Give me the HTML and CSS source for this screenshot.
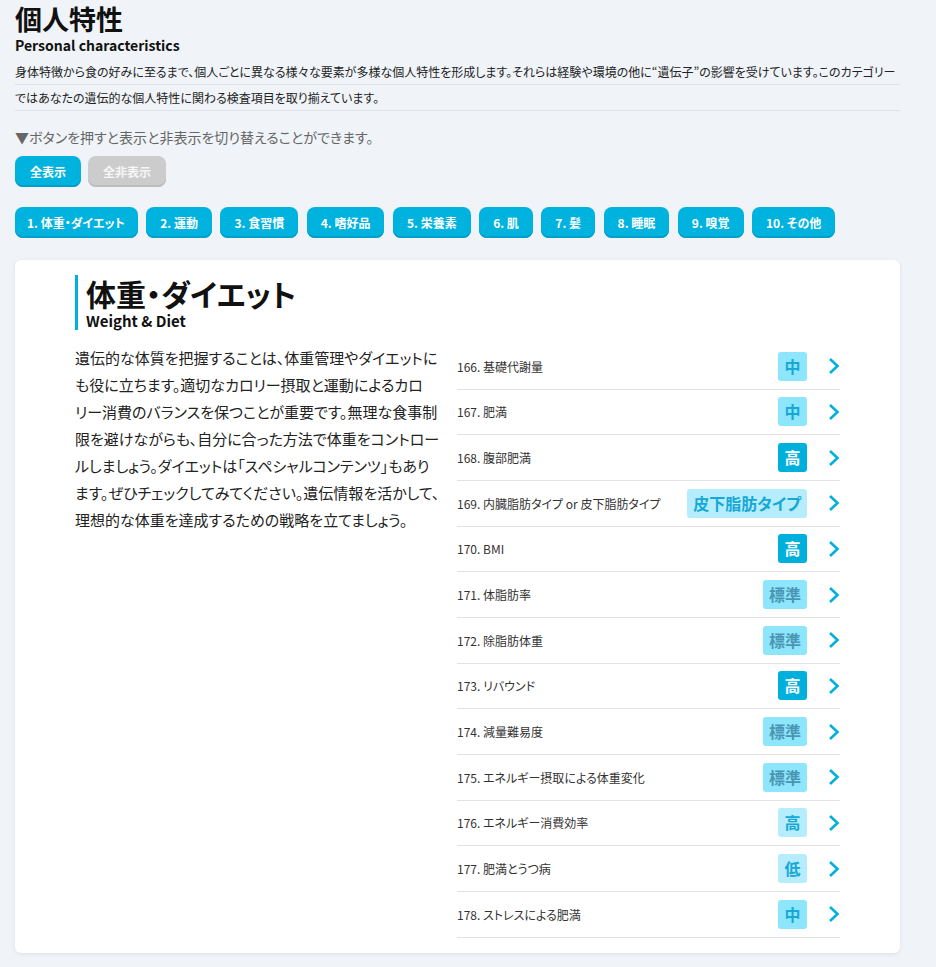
FILE: index.html
```html
<!DOCTYPE html>
<html lang="ja">
<head>
<meta charset="utf-8">
<title>個人特性</title>
<link rel="stylesheet" href="styles.css">
</head>
<body>
<div class="page">
  <header class="intro">
    <h1 class="title">個人特性</h1>
    <p class="title-en">Personal characteristics</p>
    <p class="lead">身体特徴から食の好みに至るまで、個人ごとに異なる様々な要素が多様な個人特性を形成します。それらは経験や環境の他に“遺伝子”の影響を受けています。このカテゴリーではあなたの遺伝的な個人特性に関わる検査項目を取り揃えています。</p>
    <p class="hint">▼ボタンを押すと表示と非表示を切り替えることができます。</p>
    <div class="toggles">
      <button class="btn">全表示</button>
      <button class="btn btn-off">全非表示</button>
    </div>
    <nav class="cats">
      <button class="btn">1. 体重・ダイエット</button>
      <button class="btn">2. 運動</button>
      <button class="btn">3. 食習慣</button>
      <button class="btn">4. 嗜好品</button>
      <button class="btn">5. 栄養素</button>
      <button class="btn">6. 肌</button>
      <button class="btn">7. 髪</button>
      <button class="btn">8. 睡眠</button>
      <button class="btn">9. 嗅覚</button>
      <button class="btn">10. その他</button>
    </nav>
  </header>

  <section class="card">
    <div class="sec-head">
      <h2 class="sec-title">体重・ダイエット</h2>
      <p class="sec-en">Weight &amp; Diet</p>
    </div>
    <div class="sec-body">
      <p class="sec-text">遺伝的な体質を把握することは、体重管理やダイエットに<br>も役に立ちます。適切なカロリー摂取と運動によるカロ<br>リー消費のバランスを保つことが重要です。無理な食事制<br>限を避けながらも、自分に合った方法で体重をコントロー<br>ルしましょう。ダイエットは「スペシャルコンテンツ」もあり<br>ます。ぜひチェックしてみてください。遺伝情報を活かして、<br>理想的な体重を達成するための戦略を立てましょう。</p>
      <ul class="items">
        <li class="item"><span class="name">166. 基礎代謝量</span><span class="lv lv-mid">中</span><svg class="chev" viewBox="0 0 12 18"><path d="M2 2 L9.5 9 L2 16"/></svg></li>
        <li class="item"><span class="name">167. 肥満</span><span class="lv lv-mid">中</span><svg class="chev" viewBox="0 0 12 18"><path d="M2 2 L9.5 9 L2 16"/></svg></li>
        <li class="item"><span class="name">168. 腹部肥満</span><span class="lv lv-high">高</span><svg class="chev" viewBox="0 0 12 18"><path d="M2 2 L9.5 9 L2 16"/></svg></li>
        <li class="item"><span class="name">169. 内臓脂肪タイプ or 皮下脂肪タイプ</span><span class="lv lv-light">皮下脂肪タイプ</span><svg class="chev" viewBox="0 0 12 18"><path d="M2 2 L9.5 9 L2 16"/></svg></li>
        <li class="item"><span class="name">170. BMI</span><span class="lv lv-high">高</span><svg class="chev" viewBox="0 0 12 18"><path d="M2 2 L9.5 9 L2 16"/></svg></li>
        <li class="item"><span class="name">171. 体脂肪率</span><span class="lv lv-std">標準</span><svg class="chev" viewBox="0 0 12 18"><path d="M2 2 L9.5 9 L2 16"/></svg></li>
        <li class="item"><span class="name">172. 除脂肪体重</span><span class="lv lv-std">標準</span><svg class="chev" viewBox="0 0 12 18"><path d="M2 2 L9.5 9 L2 16"/></svg></li>
        <li class="item"><span class="name">173. リバウンド</span><span class="lv lv-high">高</span><svg class="chev" viewBox="0 0 12 18"><path d="M2 2 L9.5 9 L2 16"/></svg></li>
        <li class="item"><span class="name">174. 減量難易度</span><span class="lv lv-std">標準</span><svg class="chev" viewBox="0 0 12 18"><path d="M2 2 L9.5 9 L2 16"/></svg></li>
        <li class="item"><span class="name">175. エネルギー摂取による体重変化</span><span class="lv lv-std">標準</span><svg class="chev" viewBox="0 0 12 18"><path d="M2 2 L9.5 9 L2 16"/></svg></li>
        <li class="item"><span class="name">176. エネルギー消費効率</span><span class="lv lv-light">高</span><svg class="chev" viewBox="0 0 12 18"><path d="M2 2 L9.5 9 L2 16"/></svg></li>
        <li class="item"><span class="name">177. 肥満とうつ病</span><span class="lv lv-light">低</span><svg class="chev" viewBox="0 0 12 18"><path d="M2 2 L9.5 9 L2 16"/></svg></li>
        <li class="item"><span class="name">178. ストレスによる肥満</span><span class="lv lv-mid">中</span><svg class="chev" viewBox="0 0 12 18"><path d="M2 2 L9.5 9 L2 16"/></svg></li>
      </ul>
    </div>
  </section>
</div>
</body>
</html>
```

FILE: styles.css
```css
* { box-sizing: border-box; }

html, body {
  margin: 0;
  padding: 0;
  background: #f0f4f8;
}

body {
  font-family: "Noto Sans CJK JP", "Noto Sans", sans-serif;
  font-feature-settings: "palt";
  color: #222;
}

.page {
  width: 885px;
  margin-left: 15px;
  padding-top: 1px;
  padding-bottom: 14px;
}

.title {
  margin: 0;
  font-size: 27px;
  line-height: 35px;
  font-weight: 700;
  color: #111;
}

.title-en {
  margin: 0;
  font-size: 14px;
  line-height: 18px;
  font-weight: 700;
  color: #111;
}

.lead {
  margin: 5px 0 0;
  font-size: 12px;
  line-height: 26px;
  color: #222;
  background-image: repeating-linear-gradient(to bottom, transparent 0, transparent 25px, #dfe2e6 25px, #dfe2e6 26px);
}

.hint {
  margin: 16px 0 0;
  font-size: 14px;
  line-height: 20px;
  color: #666;
}

.toggles {
  display: flex;
  gap: 7px;
  margin-top: 9px;
}

.cats {
  display: flex;
  gap: 8.5px;
  margin-top: 20px;
}

.btn {
  height: 31px;
  padding: 0 15px;
  border: 0;
  border-radius: 8px;
  background: #00b3df;
  box-shadow: inset 0 -2px 0 #00a0c9;
  color: #fff;
  font-family: inherit;
  font-feature-settings: "palt";
  font-size: 12px;
  font-weight: 700;
  line-height: 31px;
}

.cats .btn {
  padding: 0 14px;
}

.cats .btn:first-child {
  padding: 0 13px 0 12px;
}

.btn-off {
  background: #cccccc;
  box-shadow: inset 0 -2px 0 #bdbdbd;
  color: #f6f6f6;
}

.card {
  margin-top: 22px;
  background: #fff;
  border-radius: 6px;
  box-shadow: 0 1px 4px rgba(0, 0, 0, 0.08);
  padding: 15px 60px 15px 60px;
}

.sec-head {
  border-left: 3px solid #00b0de;
  padding-left: 8px;
}

.sec-title {
  margin: 0;
  font-size: 30px;
  line-height: 36px;
  font-weight: 700;
  color: #111;
}

.sec-en {
  margin: 0;
  font-size: 15px;
  line-height: 19px;
  font-weight: 700;
  color: #111;
}

.sec-body {
  display: grid;
  grid-template-columns: 1fr 383px;
  gap: 17px;
  margin-top: 14px;
}

.sec-text {
  margin: 0;
  font-size: 15px;
  line-height: 27px;
  color: #222;
  white-space: nowrap;
}

.items {
  list-style: none;
  margin: 0;
  padding: 0;
}

.item {
  display: flex;
  align-items: center;
  height: 45.67px;
  border-bottom: 1px solid #e2e2e2;
}

.name {
  flex: 1;
  font-size: 12px;
  color: #333;
}

.lv {
  height: 29px;
  min-width: 29px;
  padding: 0 6px;
  border-radius: 3px;
  font-size: 16px;
  font-weight: 700;
  line-height: 29px;
  text-align: center;
}

.lv-mid { background: #8de6fc; color: #17a8d6; }
.lv-high { background: #00b0dc; color: #fff; }
.lv-light { background: #b5edfc; color: #17a8d6; }
.lv-std { background: #8de6fc; color: #4a95b3; }

.chev {
  width: 12px;
  height: 18px;
  margin-left: 21px;
  fill: none;
  stroke: #00b0de;
  stroke-width: 2.6;
}
```
